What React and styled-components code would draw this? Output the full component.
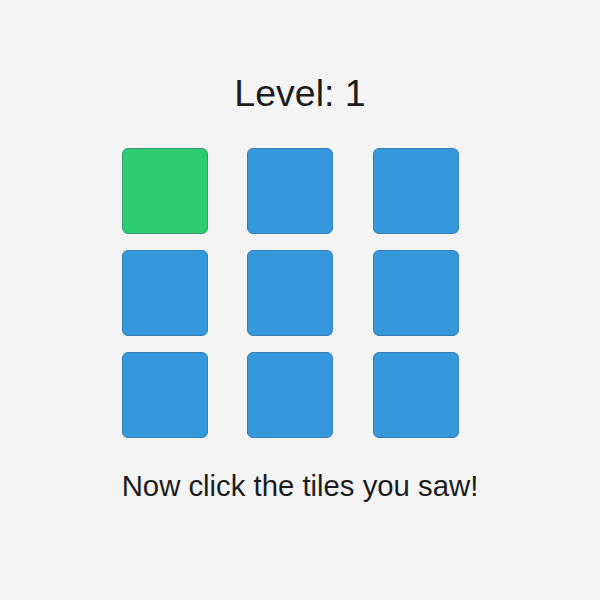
import React from "react";
import styled, { createGlobalStyle } from "styled-components";

const GlobalStyle = createGlobalStyle`
  html, body { margin: 0; padding: 0; background: #f4f4f4; }
  body { font-family: "Liberation Sans", Arial, sans-serif; color: #1c1c1c; }
`;

const Page = styled.main`
  width: 600px;
  height: 600px;
  display: flex;
  flex-direction: column;
  align-items: center;
  padding-top: 73px;
  box-sizing: border-box;
`;

const Title = styled.h1`
  margin: 0;
  font-size: 37.5px;
  line-height: 40px;
  font-weight: 400;
`;

const Grid = styled.div`
  display: grid;
  grid-template-columns: repeat(3, 86px);
  grid-auto-rows: 86px;
  column-gap: 39.5px;
  row-gap: 16px;
  margin-top: 35px;
  margin-right: 20px;
`;

const Tile = styled.div`
  border-radius: 6px;
  box-sizing: border-box;
  background: ${(p) => (p.$lit ? "#2ecc71" : "#3498db")};
  border: 1px solid ${(p) => (p.$lit ? "#3a9a78" : "#3780b5")};
`;

const Message = styled.p`
  margin: 31px 0 0;
  font-size: 29.3px;
  line-height: 34px;
`;

const tiles = [true, false, false, false, false, false, false, false, false];

export default function App() {
  return (
    <>
      <GlobalStyle />
      <Page>
        <Title>Level: 1</Title>
        <Grid>
          {tiles.map((lit, i) => (
            <Tile key={i} $lit={lit} />
          ))}
        </Grid>
        <Message>Now click the tiles you saw!</Message>
      </Page>
    </>
  );
}
